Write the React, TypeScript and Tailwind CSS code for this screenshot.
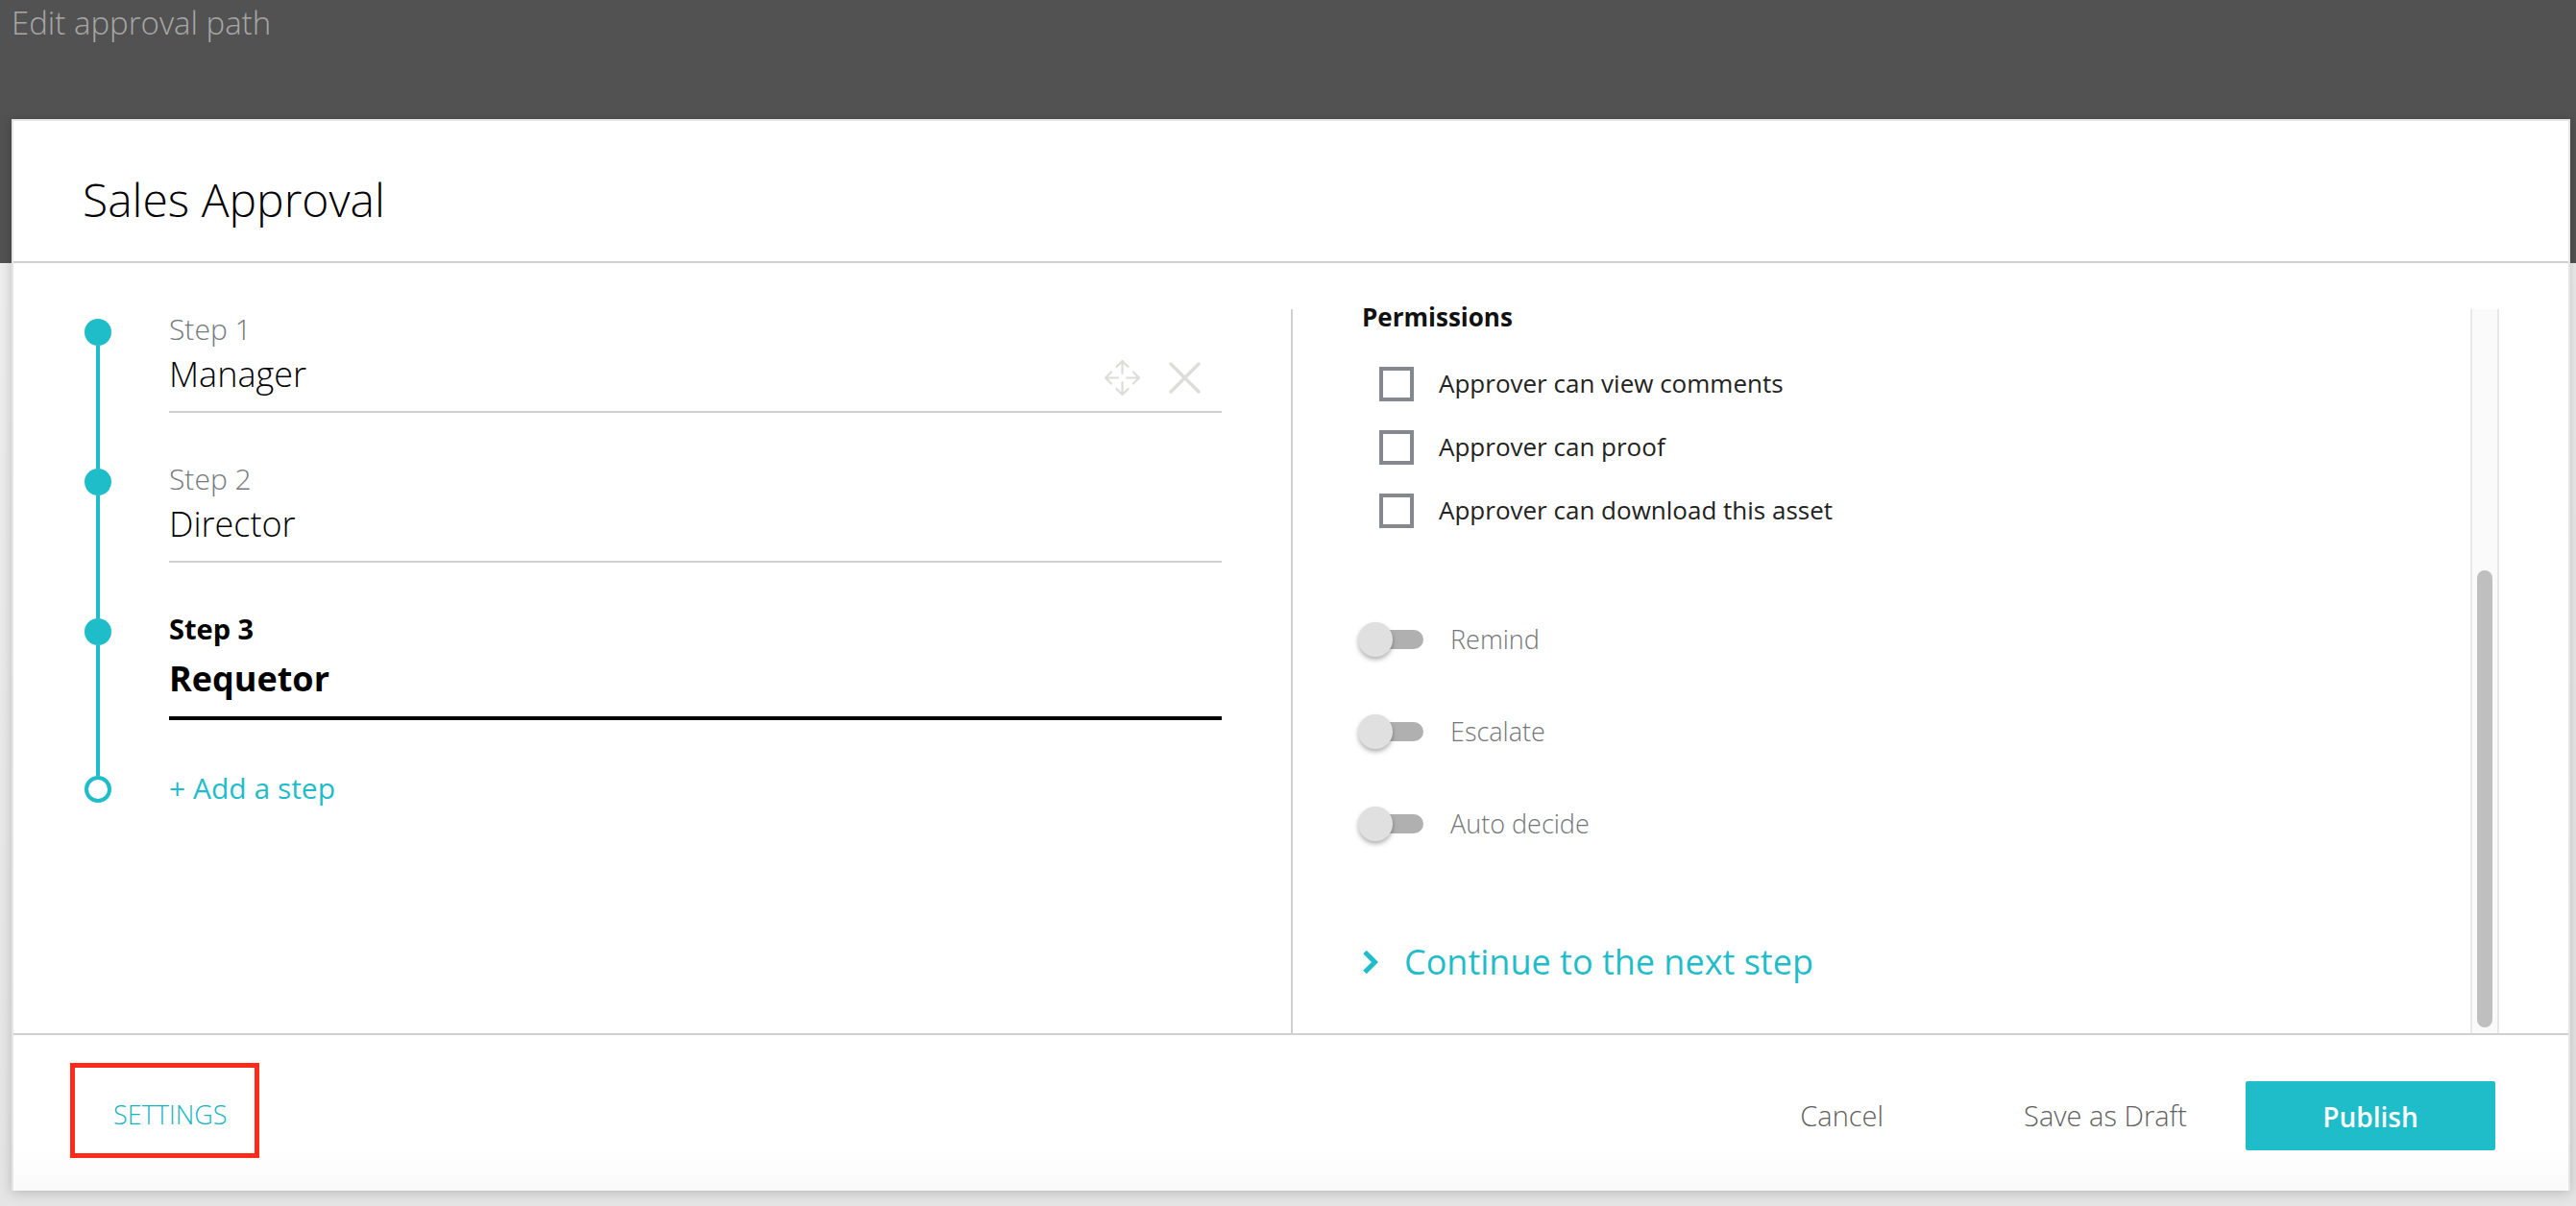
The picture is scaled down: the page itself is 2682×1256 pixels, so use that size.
const steps = [
  { label: "Step 1", name: "Manager", tools: true },
  { label: "Step 2", name: "Director" },
  { label: "Step 3", name: "Requetor", active: true },
];

const permissions = ["Approver can view comments", "Approver can proof", "Approver can download this asset"];
const toggles = ["Remind", "Escalate", "Auto decide"];

function MoveIcon() {
  return (
    <svg width="37" height="37" viewBox="0 0 37 37" fill="none" stroke="#dddddb" strokeWidth="2.2" strokeLinecap="round" strokeLinejoin="round">
      <path d="M12.5 7 18.5 1l6 6M18.5 1v13" />
      <path d="M12.5 30l6 6 6-6M18.5 36V23" />
      <path d="M7 12.5 1 18.5l6 6M1 18.5h13" />
      <path d="M30 12.5l6 6-6 6M36 18.5H23" />
    </svg>
  );
}

function CloseIcon() {
  return (
    <svg width="33" height="33" viewBox="0 0 33 33" fill="none" stroke="#dddddb" strokeWidth="3.4" strokeLinecap="round">
      <path d="M2 2l29 29M31 2 2 31" />
    </svg>
  );
}

function StepRow({ label, name, tools, active }: { label: string; name: string; tools?: boolean; active?: boolean }) {
  return (
    <div className={active ? "flex h-[164px]" : "flex h-[156px]"}>
      <div className="flex w-[28px] flex-col items-center">
        <div className="h-[28px] w-[28px] shrink-0 rounded-full bg-[#1fbdc9]" />
        <div className="w-[4px] flex-1 bg-[#1fbdc9]" />
      </div>
      <div className="ml-[60px] w-[1096px]">
        {active ? (
          <div className="-mt-[4px] h-[110px] border-b-4 border-black">
            <div className="text-[29px] leading-[30px] font-bold text-black">{label}</div>
            <div className="mt-[14px] text-[36px] leading-[46px] font-bold text-black">{name}</div>
          </div>
        ) : (
          <div className="-mt-[4px] h-[102px] border-b-2 border-[#d0d0d0]">
            <div className="text-[30px] leading-[30px] font-light text-[#75787c]">{label}</div>
            <div className="mt-[10px] flex h-[44px] items-center justify-between pr-[22px]">
              <span className="text-[36px] leading-[44px] font-light text-black">{name}</span>
              {tools && (
                <span className="mt-[6px] flex items-center gap-[30px]">
                  <MoveIcon />
                  <CloseIcon />
                </span>
              )}
            </div>
          </div>
        )}
      </div>
    </div>
  );
}

export default function App() {
  return (
    <div className="h-[1256px] w-[2682px] overflow-hidden bg-gradient-to-b from-[#f1f1f1] to-[#e5e5e5] font-['Open_Sans',sans-serif]">
      <div className="h-[274px] bg-[#525252] pl-[12px] text-[33px] leading-[48px] font-light text-[#a8a8a8]">Edit approval path</div>

      <div className="relative -mt-[150px] ml-[12px] h-[1116px] w-[2664px] border-x-2 border-t-2 border-[#e6e6e6] bg-white shadow-[0_2px_12px_rgba(0,0,0,0.2)]">
        <div className="flex h-[148px] items-center border-b-2 border-[#d0d0d0] pt-[18px] pl-[72px] text-[48px] font-light text-black">
          Sales Approval
        </div>

        <div className="flex h-[802px]">
          <div className="w-[1330px] pt-[58px] pl-[74px]">
            {steps.map((s) => (
              <StepRow key={s.label} {...s} />
            ))}
            <div className="flex">
              <div className="h-[28px] w-[28px] rounded-full border-4 border-[#1fbdc9] bg-white" />
              <div className="-mt-[1px] ml-[60px] text-[30px] leading-[28px] text-[#1fbdc9]">+ Add a step</div>
            </div>
          </div>

          <div className="mt-[48px] flex flex-1 border-l-2 border-[#d0d0d0] pr-[72px] pl-[72px]">
            <div className="flex-1">
              <div className="-mt-[4px] text-[26px] leading-[24px] font-bold text-[#111]">Permissions</div>
              <div className="mt-[40px] ml-[18px] flex flex-col gap-[30px]">
                {permissions.map((p) => (
                  <div key={p} className="flex h-[36px] items-center gap-[26px]">
                    <div className="h-[36px] w-[36px] border-4 border-[#85888c]" />
                    <span className="-mt-[2px] text-[26px] text-[#222]">{p}</span>
                  </div>
                ))}
              </div>
              <div className="mt-[98px] -ml-[4px] flex flex-col gap-[60px]">
                {toggles.map((t) => (
                  <div key={t} className="flex h-[36px] items-center gap-[28px]">
                    <div className="relative flex h-[36px] w-[68px] items-center justify-end">
                      <div className="h-[20px] w-[50px] rounded-full bg-[#b0b0b0]" />
                      <div className="absolute top-0 left-0 h-[36px] w-[36px] rounded-full bg-[#e0e0e0] shadow-[0_3px_5px_rgba(0,0,0,0.3)]" />
                    </div>
                    <span className="text-[27px] font-light text-[#737578]">{t}</span>
                  </div>
                ))}
              </div>
              <div className="mt-[104px] flex h-[44px] items-center gap-[27px]">
                <svg width="16" height="24" viewBox="0 0 16 24" fill="none" stroke="#1fbdc9" strokeWidth="5" className="ml-[1px]">
                  <path d="M2 1.5 12.5 12 2 22.5" />
                </svg>
                <span className="text-[36px] leading-[44px] text-[#1fbdc9]">Continue to the next step</span>
              </div>
            </div>
            <div className="flex w-[30px] justify-center border-x-2 border-[#e8e8e8] bg-[#fafafa]">
              <div className="mt-[272px] h-[476px] w-[16px] rounded-full bg-[#bfbfbf]" />
            </div>
          </div>
        </div>

        <div className="flex h-[164px] items-center justify-between border-t-2 border-[#d0d0d0] bg-gradient-to-b from-white from-70% to-[#fafafa] pr-[76px] pl-[59px]">
          <div className="-mt-[5px] flex h-[99px] w-[197px] items-center border-[5px] border-[#ff2a1a] pt-[10px] pl-[40px] text-[27px] font-light text-[#12b5c2]">
            SETTINGS
          </div>
          <div className="mt-[6px] flex items-center text-[29px] font-light text-[#5f5f5f]">
            <span className="ml-[-2px]">Cancel</span>
            <span className="ml-[146px]">Save as Draft</span>
            <button className="ml-[61px] h-[72px] w-[260px] rounded-[2px] bg-[#1fbdc9] pt-[2px] text-[28px] font-semibold text-white">Publish</button>
          </div>
        </div>
      </div>
    </div>
  );
}
